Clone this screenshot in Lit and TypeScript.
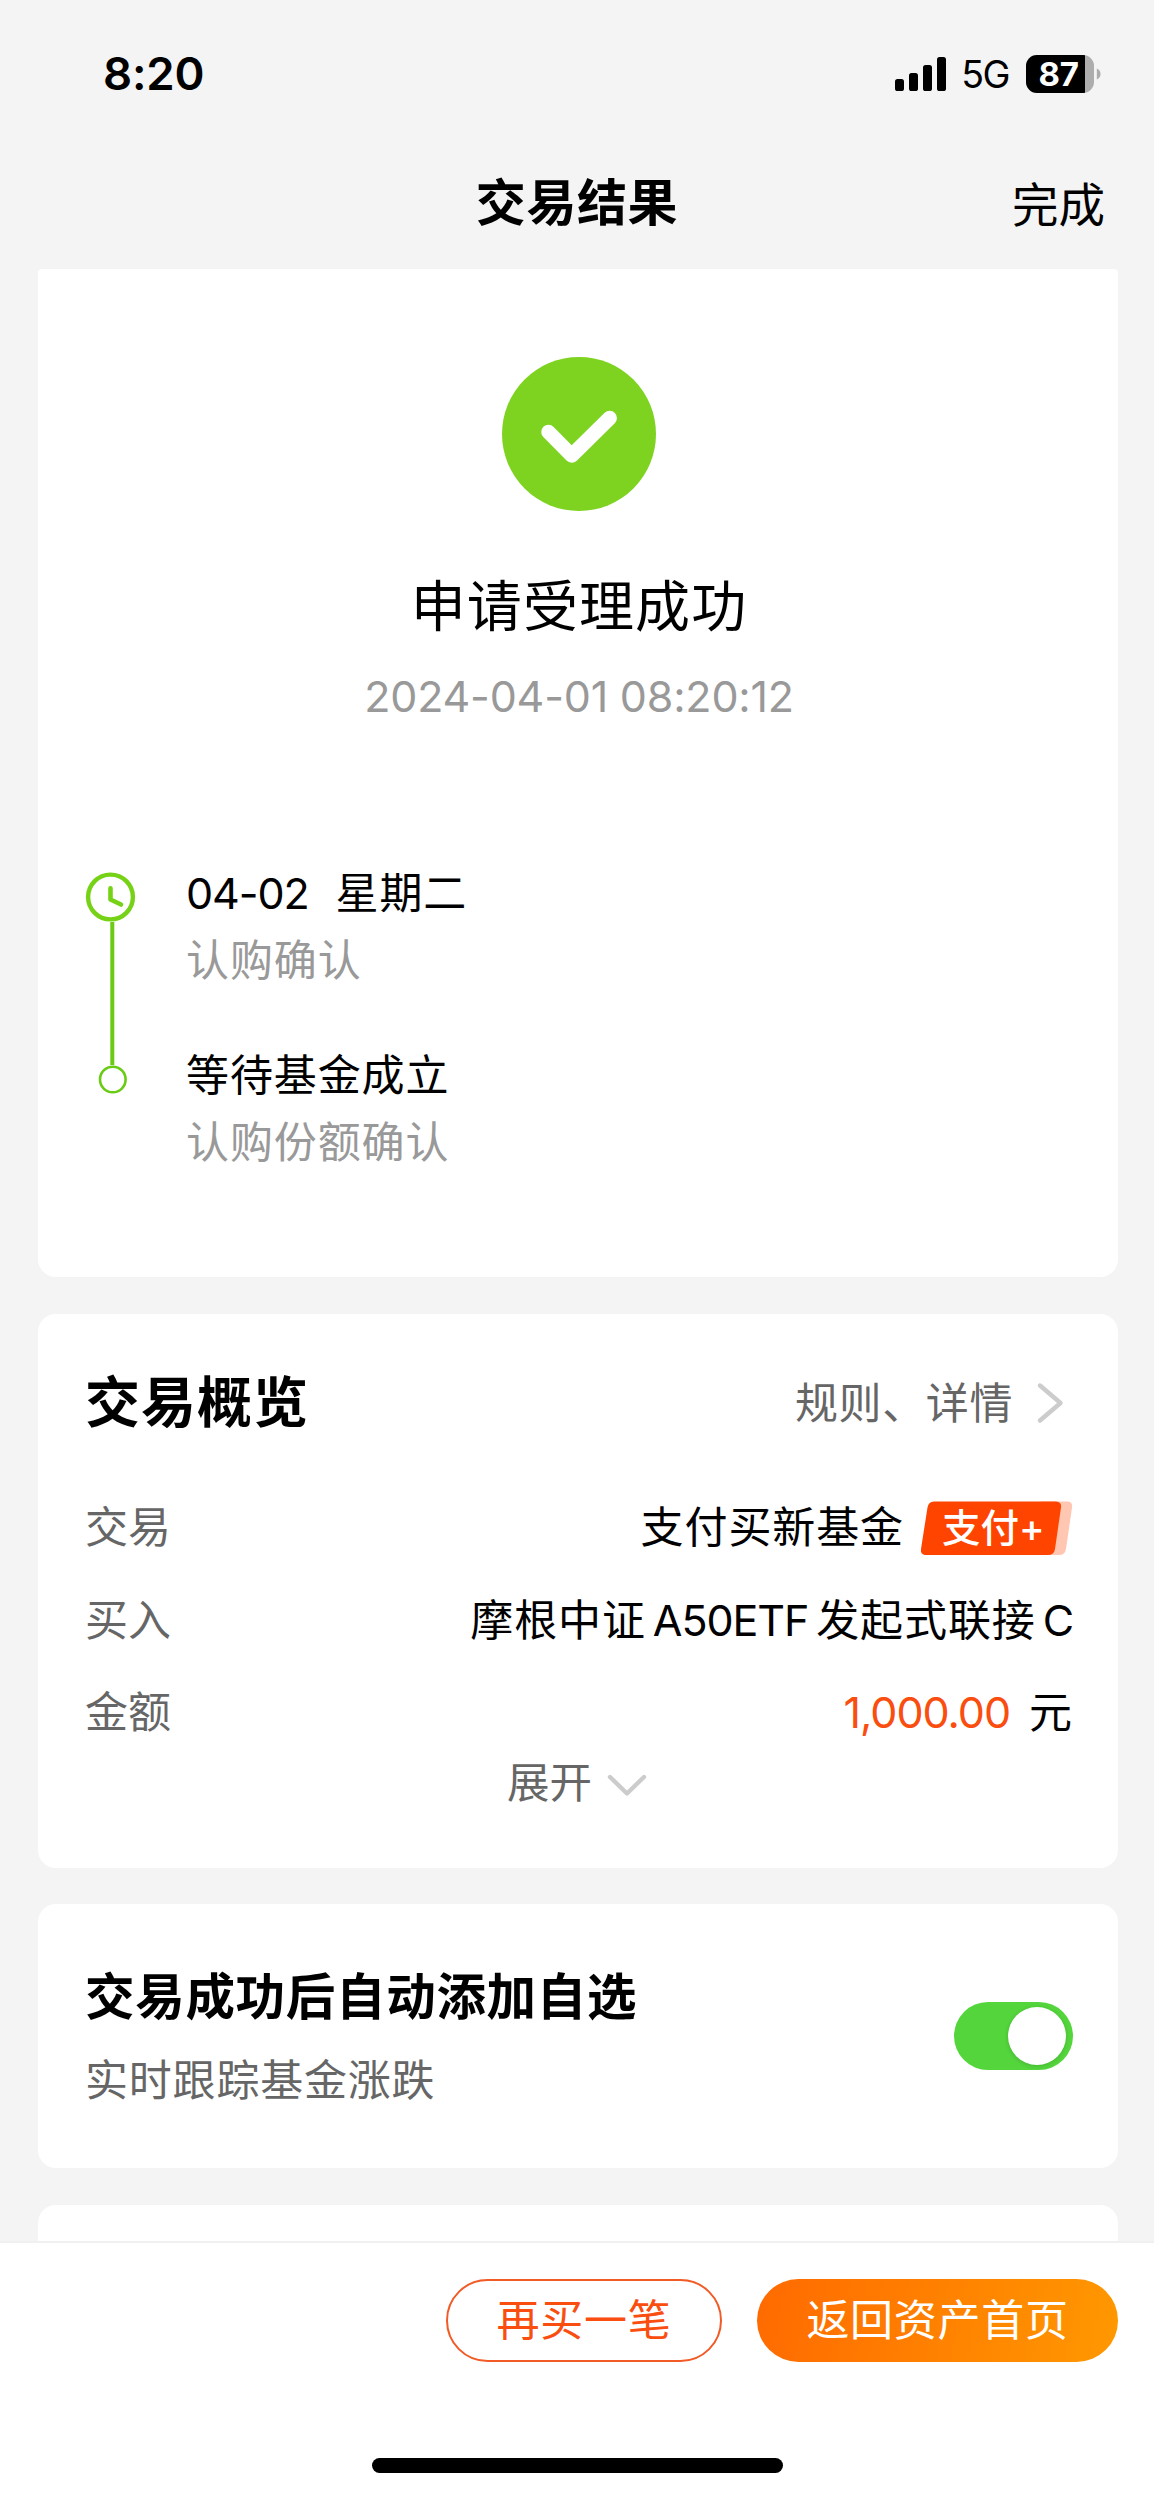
import { LitElement, html, css, svg } from "lit";
import { customElement, property } from "lit/decorators.js";

const base = css`
  :host {
    display: block;
    box-sizing: border-box;
    font-family: Inter, "Noto Sans CJK SC", sans-serif;
    color: #000;
  }
  *, *::before, *::after { box-sizing: border-box; }
  svg { display: block; }
`;

@customElement("status-bar")
class StatusBar extends LitElement {
  static styles = [base, css`
    :host { height: 148px; }
    .bar { display: flex; align-items: center; height: 148px; padding: 0 53px 0 103px; }
    .time { font-size: 45.5px; font-weight: 600; line-height: 56px; letter-spacing: -0.2px; flex: 1; }
    .net { font-size: 37.5px; line-height: 44px; letter-spacing: -1.5px; margin: 2px 17px 0 14px; }
    .battery { position: relative; width: 75px; height: 38px; }
    .level {
      position: absolute; left: 0; top: 0; width: 68px; height: 38px;
      color: #fff; font-size: 33px; font-weight: 700; line-height: 38px;
      text-align: center; padding-right: 3px; letter-spacing: -0.3px;
    }
  `];
  render() {
    return html`<div class="bar">
      <span class="time">8:20</span>
      <svg width="52" height="34" viewBox="0 0 52 34">
        <rect x="0" y="22" width="9" height="12" rx="2.6"></rect>
        <rect x="14" y="16" width="9" height="18" rx="2.6"></rect>
        <rect x="28" y="8" width="9" height="26" rx="2.6"></rect>
        <rect x="42" y="0" width="9" height="34" rx="2.6"></rect>
      </svg>
      <span class="net">5G</span>
      <div class="battery">
        <svg width="75" height="38" viewBox="0 0 75 38">
          <clipPath id="shell"><rect width="68" height="38" rx="11"></rect></clipPath>
          <g clip-path="url(#shell)">
            <rect width="68" height="38" fill="#adadad"></rect>
            <rect width="59" height="38"></rect>
          </g>
          <path d="M70.8 13.5c5 2 5 9 0 11z" fill="#adadad"></path>
        </svg>
        <span class="level">87</span>
      </div>
    </div>`;
  }
}

@customElement("timeline-steps")
class TimelineSteps extends LitElement {
  @property({ attribute: false }) steps: { date?: string; title: string; note: string }[] = [];
  static styles = [base, css`
    .wrap { display: grid; grid-template-columns: 101px 1fr; }
    .list { display: flex; flex-direction: column; gap: 48px; }
    .title, .note { font-size: 43px; line-height: 67px; letter-spacing: 0.9px; white-space: pre; }
    .date { letter-spacing: -1.1px; margin-right: 27px; }
    .note { color: #999; }
  `];
  render() {
    return html`<div class="wrap">
      <svg width="52" height="240" viewBox="0 0 52 240" fill="none">
        <path d="M27.3 62V205" stroke="#69cb13" stroke-width="4"></path>
        <circle cx="25.5" cy="37" r="22.4" stroke="#76d216" stroke-width="4.4"></circle>
        <path d="M25.5 28.3v11.2l10.5 5" stroke="#76d216" stroke-width="4.6" stroke-linecap="round" stroke-linejoin="round"></path>
        <circle cx="27.8" cy="219.5" r="12.8" stroke="#69cb13" stroke-width="2.6"></circle>
      </svg>
      <div class="list">
        ${this.steps.map((s) => html`<div>
          <div class="title">${s.date ? html`<span class="date">${s.date}</span>` : ""}${s.title}</div>
          <div class="note">${s.note}</div>
        </div>`)}
      </div>
    </div>`;
  }
}

const chevron = (down: boolean) => down
  ? html`<svg width="40" height="26" viewBox="0 0 40 26" fill="none"><path d="M3 4l17 16.5L37 4" stroke="#ccc" stroke-width="4.4" stroke-linecap="round" stroke-linejoin="round"></path></svg>`
  : html`<svg width="28" height="42" viewBox="0 0 28 42" fill="none"><path d="M4 3.5L24.5 21 4 38.5" stroke="#ccc" stroke-width="4.4" stroke-linecap="round" stroke-linejoin="round"></path></svg>`;

@customElement("app-root")
class AppRoot extends LitElement {
  static styles = [base, css`
    .page { display: flex; flex-direction: column; height: 2497px; background: #f4f4f4; overflow: hidden; }
    .nav {
      display: grid; grid-template-columns: 1fr auto 1fr; align-items: center;
      height: 121px; padding: 0 49px 11px; flex: none;
    }
    .nav-title { grid-column: 2; font-size: 50px; font-weight: 600; line-height: 60px; letter-spacing: 0.6px; }
    .nav-done { justify-self: end; font-size: 46.5px; line-height: 60px; padding-top: 4px; }
    .content { flex: 1; min-height: 0; overflow: hidden; display: flex; flex-direction: column; gap: 36.5px; padding: 0 36px 0 37.5px; }
    .card { flex: none; background: #fff; border-radius: 18px; padding: 0 45px 0 47.5px; }
    .result { height: 1008px; border-radius: 4px 4px 18px 18px; display: flex; flex-direction: column; align-items: center; padding-top: 88px; }
    .headline { font-size: 55px; line-height: 70px; letter-spacing: 1.1px; margin-top: 60px; }
    .stamp { font-size: 43px; line-height: 54px; color: #999; margin-top: 28px; letter-spacing: -0.2px; }
    .result timeline-steps { align-self: stretch; margin-top: 137px; }

    .overview { height: 554px; padding-top: 48px; }
    .head { display: flex; align-items: center; height: 80px; }
    .head-title { flex: 1; font-size: 55px; font-weight: 700; line-height: 80px; letter-spacing: 1px; }
    .head-link { display: flex; align-items: center; gap: 23px; color: #666; font-size: 43px; line-height: 80px; letter-spacing: 0.6px; padding: 3px 9px 0 0; }
    .rows { display: flex; flex-direction: column; margin-top: 39px; }
    .row { display: flex; justify-content: space-between; align-items: center; height: 92.7px; font-size: 43px; line-height: 60px; letter-spacing: 0.9px; }
    .label { color: #666; letter-spacing: 0; }
    .value { display: flex; align-items: center; }
    .latin { letter-spacing: -1.1px; margin: 0 8px 0 7px; }
    .latin.last { margin-right: 0; }
    .amount { color: #fa4d10; margin-right: 19px; letter-spacing: -1px; }
    .badge { position: relative; top: 1px; width: 152px; height: 54px; margin-left: 17px; }
    .badge-text { position: absolute; left: 21px; top: 0; color: #fff; font-size: 38.5px; font-weight: 500; line-height: 54px; letter-spacing: 0; white-space: nowrap; }
    .expand { display: flex; justify-content: center; align-items: center; gap: 15px; color: #666; font-size: 42.5px; line-height: 50px; margin-top: -1px; padding-right: 4px; }
    .expand svg { margin-top: 7px; }

    .watch { height: 264px; display: flex; align-items: center; justify-content: space-between; }
    .watch-title { font-size: 49.5px; font-weight: 600; line-height: 70px; letter-spacing: 0.7px; }
    .watch-note { font-size: 43px; color: #666; line-height: 60px; letter-spacing: 0.8px; margin-top: 18px; }
    .switch { display: flex; justify-content: flex-end; align-items: center; width: 119px; height: 68px; padding-right: 7px; border-radius: 34px; background: #53d53b; }
    .knob { width: 58px; height: 58px; border-radius: 50%; background: #fff; box-shadow: 0 1px 4px rgba(0,0,0,.16); }
    .next { height: 80px; }

    .footer { flex: none; height: 256px; background: #fff; border-top: 2px solid #f0f0f0; display: flex; flex-direction: column; align-items: stretch; }
    .actions { display: flex; justify-content: flex-end; gap: 35px; padding: 36px 36px 0 0; }
    .btn { height: 83px; border-radius: 42px; display: flex; align-items: center; justify-content: center; font-size: 43px; line-height: 60px; letter-spacing: 0.7px; padding-bottom: 2px; }
    .again { width: 276px; border: 2px solid #f25a26; color: #fa4d10; }
    .home { width: 361px; background: linear-gradient(100deg, #ff6a00, #ff9800); color: #fff; }
    .indicator { width: 411px; height: 15px; border-radius: 8px; background: #000; margin: 96px auto 0; }
  `];

  private steps = [
    { date: "04-02", title: "星期二", note: "认购确认" },
    { title: "等待基金成立", note: "认购份额确认" },
  ];

  private badge() {
    return html`<span class="badge">
      <svg width="152" height="54" viewBox="0 0 152 54">
        ${svg`<path d="M120 0.500h26q6 0 5 6l-6 41.500q-1 6-7 6h-18z" fill="#ffc6b1"></path>
        <path d="M13 0.500h121q7 0 6 6l-6 41.500q-1 6-7 6H6q-7 0-6-6L6.500 6.500q1-6 6.500-6z" fill="#ff4400"></path>`}
      </svg>
      <span class="badge-text">支付+</span>
    </span>`;
  }

  render() {
    return html`<div class="page">
      <status-bar></status-bar>
      <div class="nav">
        <div class="nav-title">交易结果</div>
        <div class="nav-done">完成</div>
      </div>
      <div class="content">
        <section class="card result">
          <svg width="154" height="154" viewBox="0 0 154 154" fill="none">
            <circle cx="77" cy="77" r="77" fill="#7ed321"></circle>
            <path d="M46.500 75L69.700 98.500 107.700 61" stroke="#fff" stroke-width="14.500" stroke-linecap="round" stroke-linejoin="round"></path>
          </svg>
          <div class="headline">申请受理成功</div>
          <div class="stamp">2024-04-01 08:20:12</div>
          <timeline-steps .steps=${this.steps}></timeline-steps>
        </section>
        <section class="card overview">
          <div class="head">
            <div class="head-title">交易概览</div>
            <div class="head-link"><span>规则、详情</span>${chevron(false)}</div>
          </div>
          <div class="rows">
            <div class="row"><span class="label">交易</span><span class="value">支付买新基金${this.badge()}</span></div>
            <div class="row"><span class="label">买入</span><span class="value">摩根中证<span class="latin">A50ETF</span>发起式联接<span class="latin last">C</span></span></div>
            <div class="row"><span class="label">金额</span><span class="value"><span class="amount">1,000.00</span>元</span></div>
          </div>
          <div class="expand"><span>展开</span>${chevron(true)}</div>
        </section>
        <section class="card watch">
          <div>
            <div class="watch-title">交易成功后自动添加自选</div>
            <div class="watch-note">实时跟踪基金涨跌</div>
          </div>
          <div class="switch"><div class="knob"></div></div>
        </section>
        <section class="card next"></section>
      </div>
      <div class="footer">
        <div class="actions">
          <div class="btn again">再买一笔</div>
          <div class="btn home">返回资产首页</div>
        </div>
        <div class="indicator"></div>
      </div>
    </div>`;
  }
}
